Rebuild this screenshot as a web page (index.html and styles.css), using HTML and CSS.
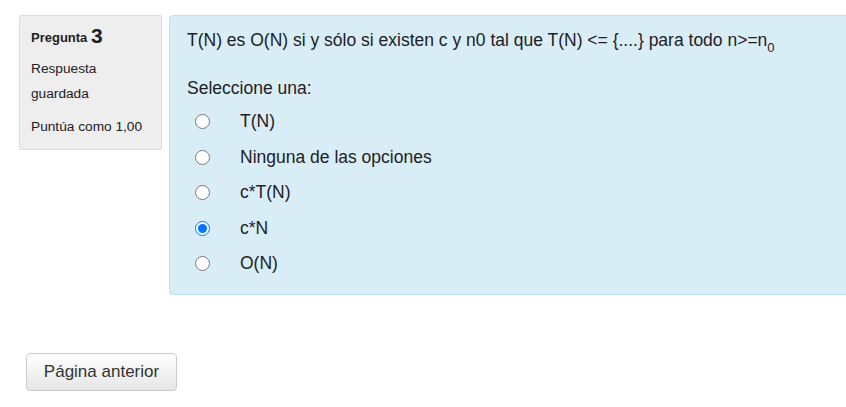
FILE: index.html
```html
<!DOCTYPE html>
<html lang="es">
<head>
<meta charset="utf-8">
<title>Pregunta 3</title>
<link rel="stylesheet" href="styles.css">
</head>
<body>
<div class="que">
  <div class="info">
    <h3 class="no">Pregunta <span class="qno">3</span></h3>
    <div class="state">Respuesta guardada</div>
    <div class="grade">Puntúa como 1,00</div>
  </div>
  <div class="content">
    <div class="qtext">T(N) es O(N) si y sólo si existen c y n0 tal que T(N) &lt;= {....} para todo n&gt;=n<sub>0</sub></div>
    <div class="prompt">Seleccione una:</div>
    <div class="answer">
      <label class="opt"><input type="radio" name="q3"><span>T(N)</span></label>
      <label class="opt"><input type="radio" name="q3"><span>Ninguna de las opciones</span></label>
      <label class="opt"><input type="radio" name="q3"><span>c*T(N)</span></label>
      <label class="opt"><input type="radio" name="q3" checked><span>c*N</span></label>
      <label class="opt"><input type="radio" name="q3"><span>O(N)</span></label>
    </div>
  </div>
</div>
<div class="nav">
  <button class="btn" type="button">Página anterior</button>
</div>
</body>
</html>
```
FILE: styles.css
```css
html, body { margin: 0; padding: 0; background: #fff; }
body {
  font-family: "Liberation Sans", Arial, sans-serif;
  color: #1d2125;
  font-size: 17.5px;
}
.que {
  display: flex;
  align-items: flex-start;
  padding: 15px 0 0 19px;
  gap: 7px;
}
.info {
  width: 120px;
  flex: none;
  background: #eee;
  border: 1px solid #dcdcdc;
  border-radius: 2px;
  padding: 7px 10px 12px 11px;
  font-size: 13.7px;
  color: #1d2125;
}
.no {
  margin: 0 0 5px;
  font-size: 13px;
  font-weight: bold;
  line-height: 26px;
}
.qno { font-size: 21px; font-weight: bold; vertical-align: -1px; }
.state { line-height: 25px; margin-bottom: 11px; }
.grade { line-height: 20px; }
.content {
  flex: 1;
  background: #d9edf7;
  border: 1px solid #b7e3ef;
  border-right: none;
  border-radius: 4px 0 0 4px;
  padding: 11px 0 14px 17px;
  height: 253px;
}
.qtext { line-height: 26px; }
.qtext sub { font-size: 13px; vertical-align: -6px; line-height: 0; }
.prompt { margin-top: 22px; line-height: 26px; }
.answer { display: flex; flex-direction: column; margin-top: 3px; }
.opt {
  display: flex;
  align-items: center;
  height: 35.5px;
  padding-left: 8px;
}
.opt input {
  margin: 0;
  width: 15px;
  height: 15px;
  flex: none;
}
.opt span { margin-left: 30px; }
.nav { padding: 58px 0 0 26px; }
.btn {
  font-family: "Liberation Sans", Arial, sans-serif;
  font-size: 17px;
  color: #333;
  width: 151px;
  height: 38px;
  border: 1px solid #ccc;
  border-radius: 4px;
  background: linear-gradient(#fff, #e6e6e6);
  padding: 0;
}
```
